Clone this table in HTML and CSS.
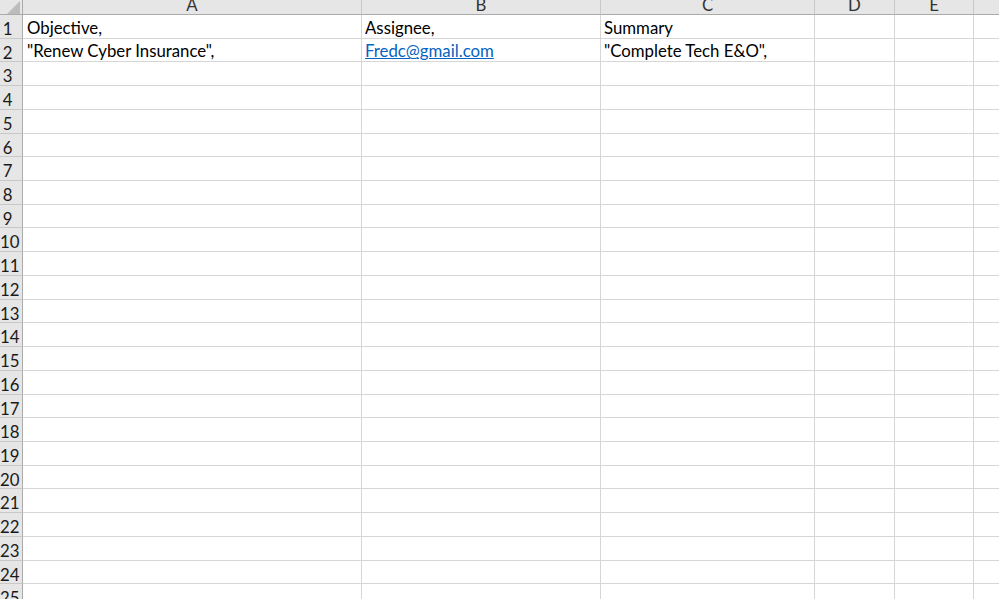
FILE: index.html
```html
<!DOCTYPE html>
<html>
<head>
<meta charset="utf-8">
<link rel="stylesheet" href="styles.css">
</head>
<body>
<div class="sheet">
  <div class="corner"><svg width="22" height="14" viewBox="0 0 22 14"><polygon points="7,14 20,14 20,1" fill="#bcbcbc"/></svg></div>
  <div class="colhead"><span>A</span></div>
  <div class="colhead"><span>B</span></div>
  <div class="colhead"><span>C</span></div>
  <div class="colhead"><span>D</span></div>
  <div class="colhead"><span>E</span></div>
  <div class="colhead last"></div>

  <div class="rh">1</div><div class="c">Objective,</div><div class="c">Assignee,</div><div class="c">Summary</div><div class="c"></div><div class="c"></div><div class="c last"></div>
  <div class="rh">2</div><div class="c">"Renew Cyber Insurance",</div><div class="c"><a class="link" href="#">Fredc@gmail.com</a></div><div class="c">"Complete Tech E&amp;O",</div><div class="c"></div><div class="c"></div><div class="c last"></div>
  <div class="rh">3</div><div class="c"></div><div class="c"></div><div class="c"></div><div class="c"></div><div class="c"></div><div class="c last"></div>
  <div class="rh">4</div><div class="c"></div><div class="c"></div><div class="c"></div><div class="c"></div><div class="c"></div><div class="c last"></div>
  <div class="rh">5</div><div class="c"></div><div class="c"></div><div class="c"></div><div class="c"></div><div class="c"></div><div class="c last"></div>
  <div class="rh">6</div><div class="c"></div><div class="c"></div><div class="c"></div><div class="c"></div><div class="c"></div><div class="c last"></div>
  <div class="rh">7</div><div class="c"></div><div class="c"></div><div class="c"></div><div class="c"></div><div class="c"></div><div class="c last"></div>
  <div class="rh">8</div><div class="c"></div><div class="c"></div><div class="c"></div><div class="c"></div><div class="c"></div><div class="c last"></div>
  <div class="rh">9</div><div class="c"></div><div class="c"></div><div class="c"></div><div class="c"></div><div class="c"></div><div class="c last"></div>
  <div class="rh">10</div><div class="c"></div><div class="c"></div><div class="c"></div><div class="c"></div><div class="c"></div><div class="c last"></div>
  <div class="rh">11</div><div class="c"></div><div class="c"></div><div class="c"></div><div class="c"></div><div class="c"></div><div class="c last"></div>
  <div class="rh">12</div><div class="c"></div><div class="c"></div><div class="c"></div><div class="c"></div><div class="c"></div><div class="c last"></div>
  <div class="rh">13</div><div class="c"></div><div class="c"></div><div class="c"></div><div class="c"></div><div class="c"></div><div class="c last"></div>
  <div class="rh">14</div><div class="c"></div><div class="c"></div><div class="c"></div><div class="c"></div><div class="c"></div><div class="c last"></div>
  <div class="rh">15</div><div class="c"></div><div class="c"></div><div class="c"></div><div class="c"></div><div class="c"></div><div class="c last"></div>
  <div class="rh">16</div><div class="c"></div><div class="c"></div><div class="c"></div><div class="c"></div><div class="c"></div><div class="c last"></div>
  <div class="rh">17</div><div class="c"></div><div class="c"></div><div class="c"></div><div class="c"></div><div class="c"></div><div class="c last"></div>
  <div class="rh">18</div><div class="c"></div><div class="c"></div><div class="c"></div><div class="c"></div><div class="c"></div><div class="c last"></div>
  <div class="rh">19</div><div class="c"></div><div class="c"></div><div class="c"></div><div class="c"></div><div class="c"></div><div class="c last"></div>
  <div class="rh">20</div><div class="c"></div><div class="c"></div><div class="c"></div><div class="c"></div><div class="c"></div><div class="c last"></div>
  <div class="rh">21</div><div class="c"></div><div class="c"></div><div class="c"></div><div class="c"></div><div class="c"></div><div class="c last"></div>
  <div class="rh">22</div><div class="c"></div><div class="c"></div><div class="c"></div><div class="c"></div><div class="c"></div><div class="c last"></div>
  <div class="rh">23</div><div class="c"></div><div class="c"></div><div class="c"></div><div class="c"></div><div class="c"></div><div class="c last"></div>
  <div class="rh">24</div><div class="c"></div><div class="c"></div><div class="c"></div><div class="c"></div><div class="c"></div><div class="c last"></div>
  <div class="rh">25</div><div class="c"></div><div class="c"></div><div class="c"></div><div class="c"></div><div class="c"></div><div class="c last"></div>
</div>
</body>
</html>
```
FILE: styles.css
```css
html, body { margin: 0; padding: 0; background: #fff; overflow: hidden; }
body { width: 999px; height: 599px; }
.sheet {
  display: grid;
  grid-template-columns: 23px 339px 239px 214px 80px 79px 1fr;
  grid-template-rows: 15px;
  grid-auto-rows: 23.72px;
  font-family: Lato, "Liberation Sans", sans-serif;
  font-size: 16.8px;
  color: #000;
}
.corner, .colhead {
  background: #e6e6e6;
  border-bottom: 1px solid #ababab;
  border-right: 1px solid #c8c8c8;
  overflow: hidden;
}
.corner { border-right-color: #ababab; }
.corner svg { display: block; }
.colhead { text-align: center; color: #333; }
.colhead span { display: block; line-height: 16px; margin-top: -3px; }
.colhead.last { border-right: none; }

.rh {
  background: #e6e6e6;
  border-right: 1px solid #ababab;
  border-bottom: 1px solid #c8c8c8;
  color: #1a1a1a;
  text-align: center;
  padding-right: 7px;
  line-height: 22px;
  padding-top: 3px;
  overflow: hidden;
  white-space: nowrap;
}
.c {
  border-right: 1px solid #d6d6d6;
  border-bottom: 1px solid #d6d6d6;
  display: flex;
  align-items: flex-end;
  padding: 0 0 0 3px;
  line-height: 20px;
  white-space: nowrap;
  overflow: hidden;
}
.c:nth-child(7n+2) { padding-left: 4px; }
.c.last { border-right: none; }
.link { color: #0563c1; text-decoration: underline; }
```
